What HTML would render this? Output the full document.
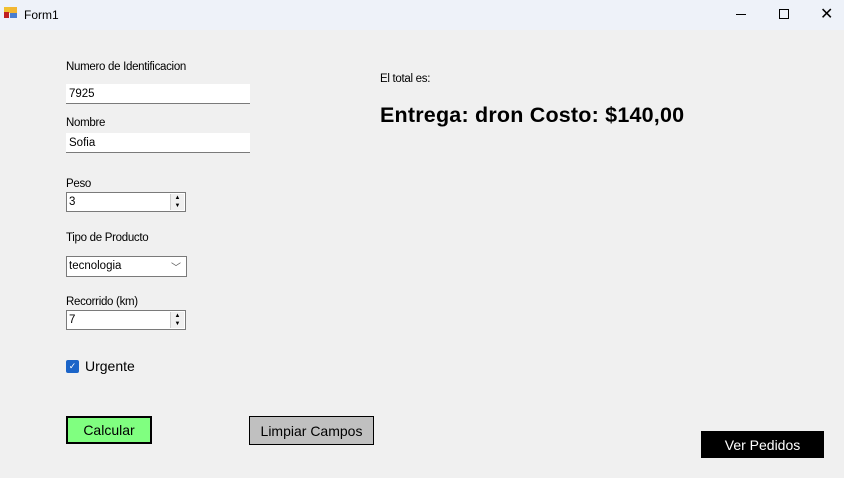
<!DOCTYPE html><html><head><style>
body{margin:0;width:844px;height:478px;background:#f0f0f0;font-family:"Liberation Sans",sans-serif;position:relative;overflow:hidden}
.a{position:absolute}
.lbl{font-size:11.5px;color:#000;letter-spacing:-0.3px}
.tb{background:#fff;border-bottom:1px solid #7a7a7a;font-size:11.5px;padding-left:3px;box-sizing:border-box;line-height:20px}
.sp{background:#fff;border:1px solid #7a7a7a;font-size:11.5px;box-sizing:border-box;padding-left:2px;line-height:18px}
.arr{position:absolute;right:1px;top:1px;width:13px;height:16px;border-left:1px solid #ccc;font-size:6px;line-height:8px;text-align:center;background:#f0f0f0}
</style></head><body>
<div class="a" style="left:0;top:0;width:844px;height:30px;background:#eef2f9"></div>
<div class="a" style="left:4px;top:7px;width:6px;height:6px;background:#f0c030"></div>
<div class="a" style="left:10px;top:7px;width:7px;height:7px;background:#f2b632"></div>
<div class="a" style="left:4px;top:12px;width:5px;height:6px;background:#c02020"></div>
<div class="a" style="left:10px;top:13px;width:7px;height:5px;background:#4a7ed0"></div>
<div class="a" style="left:24px;top:8px;font-size:12px">Form1</div>
<div class="a" style="left:736px;top:14px;width:10px;height:1px;background:#000"></div>
<div class="a" style="left:779px;top:9px;width:8px;height:8px;border:1px solid #000"></div>
<div class="a" style="left:820px;top:5px;font-size:16px;line-height:20px">✕</div>
<div class="a lbl" style="left:66px;top:61px">Numero de Identificacion</div>
<div class="a tb" style="left:66px;top:84px;width:184px;height:20px">7925</div>
<div class="a lbl" style="left:66px;top:117px">Nombre</div>
<div class="a tb" style="left:66px;top:133px;width:184px;height:20px">Sofia</div>
<div class="a lbl" style="left:66px;top:178px">Peso</div>
<div class="a sp" style="left:66px;top:192px;width:120px;height:20px">3<div class="arr">▲<br>▼</div></div>
<div class="a lbl" style="left:66px;top:232px">Tipo de Producto</div>
<div class="a sp" style="left:66px;top:256px;width:121px;height:21px;line-height:19px">tecnologia<span style="position:absolute;right:5px;top:2px;color:#555;font-size:10px">﹀</span></div>
<div class="a lbl" style="left:66px;top:296px">Recorrido (km)</div>
<div class="a sp" style="left:66px;top:310px;width:120px;height:20px">7<div class="arr">▲<br>▼</div></div>
<div class="a" style="left:66px;top:360px;width:13px;height:13px;background:#1b64c8;border-radius:2px;color:#fff;font-size:9px;text-align:center;line-height:13px">✓</div>
<div class="a" style="left:85px;top:358px;font-size:14px">Urgente</div>
<div class="a" style="left:66px;top:416px;width:86px;height:28px;box-sizing:border-box;background:#80ff80;border:2px solid #000;font-size:14px;text-align:center;line-height:25px">Calcular</div>
<div class="a" style="left:249px;top:416px;width:125px;height:29px;box-sizing:border-box;background:#c0c0c0;border:1px solid #000;font-size:14px;text-align:center;line-height:28px">Limpiar Campos</div>
<div class="a" style="left:701px;top:431px;width:123px;height:27px;background:#000;color:#fff;font-size:14px;text-align:center;line-height:28px">Ver Pedidos</div>
<div class="a lbl" style="left:380px;top:73px">El total es:</div>
<div class="a" style="left:380px;top:103px;font-size:21.5px;font-weight:bold;letter-spacing:0.2px">Entrega: dron Costo: $140,00</div>
</body></html>
